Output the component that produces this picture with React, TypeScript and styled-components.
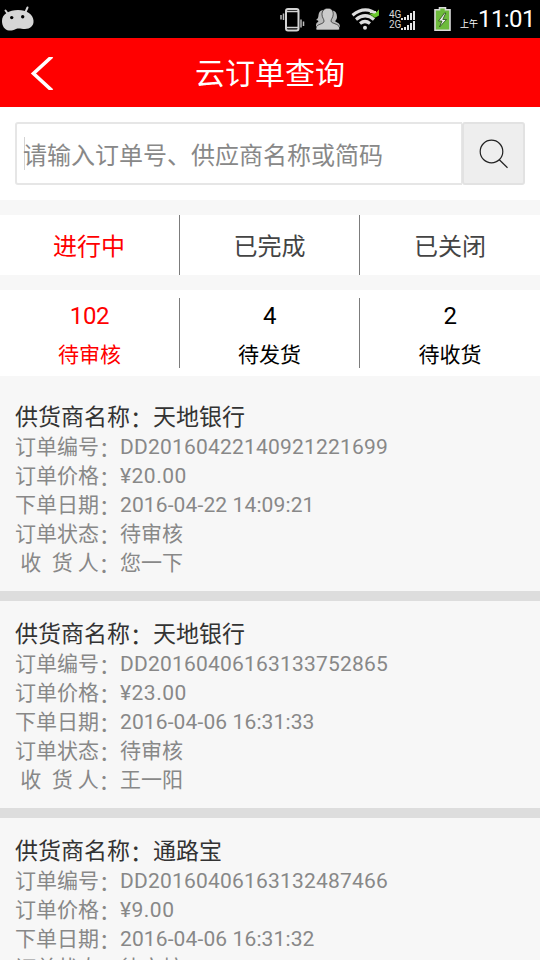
import React from "react";
import styled, { createGlobalStyle } from "styled-components";

const GlobalStyle = createGlobalStyle`
  * { box-sizing: border-box; }
  html, body { margin: 0; height: 960px; overflow: hidden; }
  body {
    background: #f7f7f7;
    font-family: Roboto, "Noto Sans CJK SC", sans-serif;
  }
`;

const Screen = styled.div`
  width: 540px;
  height: 960px;
  overflow: hidden;
  display: flex;
  flex-direction: column;
  background: #f7f7f7;
`;

const StatusBar = styled.div`
  flex: none;
  height: 38px;
  display: flex;
  align-items: flex-start;
  background: #000;
  color: #fff;
`;

const StatusIcon = styled.svg<{ $left?: number }>`
  flex: none;
  display: block;
  margin-left: ${(p) => p.$left ?? 0}px;
`;

const Spacer = styled.div`
  flex: 1;
`;

const Networks = styled.div`
  margin: 10px 0 0 9px;
  width: 28px;
`;

const Network = styled.div`
  height: 10px;
  display: flex;
  align-items: center;
  font-size: 10px;
  line-height: 10px;
  color: #d8d8d8;
  white-space: nowrap;
`;

const Meridiem = styled.span`
  margin: 15px 0 0 9px;
  width: 18px;
  font-size: 9px;
  line-height: 18px;
`;

const Clock = styled.span`
  width: 62px;
  font-size: 24px;
  line-height: 38px;
  letter-spacing: -0.6px;
`;

const Header = styled.header`
  flex: none;
  height: 69px;
  display: grid;
  grid-template-columns: 84px 1fr 84px;
  align-items: center;
  background: #f00;
  color: #fff;
`;

const BackButton = styled.button`
  height: 69px;
  padding: 0 0 0 30px;
  border: 0;
  background: none;
  display: flex;
  align-items: center;
`;

const Title = styled.h1`
  margin: 0;
  font-size: 30px;
  line-height: 71px;
  font-weight: 400;
  text-align: center;
`;

const SearchBar = styled.div`
  flex: none;
  height: 93px;
  padding: 15px;
  display: flex;
  background: #fff;
`;

const SearchField = styled.div`
  width: 447px;
  height: 63px;
  padding-left: 8px;
  display: flex;
  align-items: center;
  border: 2px solid #e6e6e6;
  border-right-width: 1px;
  border-radius: 3px 0 0 3px;
  color: #888;
  font-size: 24px;
  line-height: 34px;
`;

const Placeholder = styled.span`
  padding-top: 4px;
`;

const Caret = styled.span`
  width: 1px;
  height: 33px;
  margin: 0 -2px 0 -1px;
  background: #d4d4d4;
`;

const SearchButton = styled.button`
  width: 63px;
  height: 63px;
  padding: 0;
  display: flex;
  align-items: center;
  justify-content: center;
  border: 2px solid #e2e2e2;
  border-radius: 3px;
  background: #eee;
`;

const Tabs = styled.nav`
  flex: none;
  height: 60px;
  margin-top: 15px;
  display: grid;
  grid-template-columns: repeat(3, 180px);
  grid-template-rows: 60px;
  background: #fff;
`;

const Tab = styled.div<{ $active?: boolean }>`
  padding: 4px 1px 0 0;
  text-align: center;
  font-size: 24px;
  line-height: 56px;
  color: ${(p) => (p.$active ? "#f00" : "#444")};
  & + & { padding-right: 0; }
  &:not(:last-child) { border-right: 1px solid #7c7c7c; }
`;

const Stats = styled.div`
  flex: none;
  height: 86px;
  margin-top: 15px;
  padding: 8px 0;
  display: grid;
  grid-template-columns: repeat(3, 180px);
  background: #fff;
`;

const Stat = styled.div<{ $active?: boolean }>`
  height: 70px;
  display: flex;
  flex-direction: column;
  align-items: center;
  color: ${(p) => (p.$active ? "#f00" : "#000")};
  &:not(:last-child) { border-right: 1px solid #7c7c7c; }
`;

const Count = styled.span`
  height: 37px;
  font-size: 24px;
  line-height: 37px;
  letter-spacing: -0.3px;
`;

const StatLabel = styled.span`
  font-size: 21px;
  line-height: 41px;
`;

const OrderList = styled.main`
  flex: 1;
  min-height: 0;
  padding-top: 8px;
  overflow: hidden;
`;

const OrderCard = styled.article`
  height: 217px;
  padding: 15px 15px 0;
  border-bottom: 10px solid #ddd;
`;

const Supplier = styled.div`
  height: 34px;
  font-size: 23px;
  line-height: 38px;
  color: #333;
`;

const OrderRow = styled.div`
  height: 29px;
  display: flex;
  font-size: 21px;
  line-height: 29px;
  color: #888;
  white-space: pre;
`;

const RowLabel = styled.span`
  width: 105px;
`;

const Colon = styled.span`
  line-height: 0;
  vertical-align: -2px;
`;

const RowValue = styled.span<{ $tracking?: number }>`
  letter-spacing: ${(p) => p.$tracking ?? 0}px;
`;

interface Order {
  supplier: string;
  code: string;
  price: string;
  date: string;
  receiver: string;
}

const orders: Order[] = [
  { supplier: "天地银行", code: "DD20160422140921221699", price: "¥20.00", date: "2016-04-22 14:09:21", receiver: "您一下" },
  { supplier: "天地银行", code: "DD20160406163133752865", price: "¥23.00", date: "2016-04-06 16:31:33", receiver: "王一阳" },
  { supplier: "通路宝", code: "DD20160406163132487466", price: "¥9.00", date: "2016-04-06 16:31:32", receiver: "王一阳" },
];

const tabs = ["进行中", "已完成", "已关闭"];
const stats = [
  { count: 102, label: "待审核" },
  { count: 4, label: "待发货" },
  { count: 2, label: "待收货" },
];

const Bars = () => (
  <svg width="15" height="9" viewBox="0 0 15 9" fill="#e4e4e4">
    <path d="M0 7h2v2H0zM3 6h2v3H3zM6 4h2v5H6zM9 2h2v7H9zM12 0h2v9h-2z" />
  </svg>
);

const Robot = () => (
  <StatusIcon width="38" height="38" viewBox="0 0 38 38">
    <path d="M5.500 10.500l2.500 3.500M27.500 7.500L25.500 12" stroke="#d6d6d6" strokeWidth="2" strokeLinecap="round" />
    <path d="M2 21C2 14 9 10 18 10s15 4.500 15.500 10.500C34 26 30 29 25 29c-4 0-6-1-9 0-3 1.500-5 1.700-7 1.500C4.500 30 2 26 2 21z" fill="#d6d6d6" />
    <circle cx="11.700" cy="17.600" r="1.700" />
    <circle cx="22.700" cy="16.800" r="1.700" />
  </StatusIcon>
);

const Vibrate = () => (
  <StatusIcon width="26" height="38" viewBox="280 0 26 38" fill="none">
    <rect x="286" y="9" width="12.500" height="21.500" rx="2" stroke="#d4d4d4" strokeWidth="2" />
    <path d="M286 11.500h12.500M286 27.500h12.500" stroke="#d4d4d4" strokeWidth="1.500" />
    <path d="M283.500 13.500v6.500M281 15v4.500M301 19.500v8M303.500 21.500v4.500" stroke="#bbb" strokeWidth="1.500" />
  </StatusIcon>
);

const People = () => (
  <StatusIcon $left={8} width="28" height="38" viewBox="315 0 28 38" fill="#ccc">
    <path d="M319 22c1-1 0-2-2-2 3-2 2-4 3-7 1-3 5-4 8-2v13l-9 3h-2c0-3 0-4 2-5z" fill="#bbb" />
    <path d="M332 11c4-1 6 2 6 6 0 3-3 4-1 5s4 1 4 5h-9z" fill="#bbb" />
    <path d="M329 8.300c3.700 0 5.400 2.700 5.200 6.200-.1 3-2.200 4.700-2.200 6.500 0 2.800 7.500 2.300 8.500 6.500.2 1 .1 2-.5 2.500h-22.500c-.8-.8-.5-2.700.3-3.800 1.900-2.400 7.200-2.200 7.200-5.200 0-1.900-2-3.500-2-6.500-.1-3.700 2-6.200 6-6.200z" stroke="#000" strokeWidth=".6" />
  </StatusIcon>
);

const Wifi = () => (
  <StatusIcon $left={9} width="29" height="38" viewBox="352 0 29 38" fill="none">
    <path d="M353.500 15.200Q366.500 4.500 379 15.200M357 19.500Q366.500 12 375 19.500M361 23.500q5-4 10 0" stroke="#dedede" strokeWidth="3.200" />
    <circle cx="366" cy="27.700" r="2" fill="#dedede" />
    <path d="M370 14.500l5 3.200 5-8.200v6l-4 2z" fill="#69c82b" />
    <path d="M370 13.500h6l4-4v5l-4 3z" fill="#69c82b" />
    <path d="M371 12h6" stroke="#dedede" strokeWidth="2" />
  </StatusIcon>
);

const Battery = () => (
  <StatusIcon $left={17} width="17" height="38" viewBox="434 0 17 38">
    <path d="M439.500 7.800h6v2h4.500v20.500h-15v-20.500h4.500z" fill="#6dbb3b" stroke="#dadada" strokeWidth="1.600" />
    <path d="M444.500 13l-6 8h3.500l-2.500 6 7-7.500h-3.700l3-6.500z" fill="#eee" stroke="#284917" strokeWidth=".8" />
  </StatusIcon>
);

export default function App() {
  return (
    <>
      <GlobalStyle />
      <Screen>
        <StatusBar>
          <Robot />
          <Spacer />
          <Vibrate />
          <People />
          <Wifi />
          <Networks>
            <Network>4G<Bars /></Network>
            <Network>2G<Bars /></Network>
          </Networks>
          <Battery />
          <Meridiem>上午</Meridiem>
          <Clock>11:01</Clock>
        </StatusBar>

        <Header>
          <BackButton aria-label="返回">
            <svg width="24" height="33" viewBox="0 0 24 33" fill="none" stroke="#fff" strokeWidth="3.600">
              <path d="M22 -0.500L3.500 16.500l18.500 17" />
            </svg>
          </BackButton>
          <Title>云订单查询</Title>
        </Header>

        <SearchBar>
          <SearchField>
            <Caret />
            <Placeholder>请输入订单号、供应商名称或简码</Placeholder>
          </SearchField>
          <SearchButton aria-label="搜索">
            <svg width="30" height="30" viewBox="0 0 30 30" fill="none" stroke="#222" strokeWidth="1.200">
              <circle cx="12.500" cy="12.500" r="11.300" />
              <path d="M20.300 20.700l8.200 8" />
            </svg>
          </SearchButton>
        </SearchBar>

        <Tabs>
          {tabs.map((name, i) => (
            <Tab key={name} $active={i === 0}>{name}</Tab>
          ))}
        </Tabs>

        <Stats>
          {stats.map((s, i) => (
            <Stat key={s.label} $active={i === 0}>
              <Count>{s.count}</Count>
              <StatLabel>{s.label}</StatLabel>
            </Stat>
          ))}
        </Stats>

        <OrderList>
          {orders.map((o) => (
            <OrderCard key={o.code}>
              <Supplier>供货商名称<Colon>：</Colon>{o.supplier}</Supplier>
              <OrderRow><RowLabel>订单编号<Colon>：</Colon></RowLabel><RowValue $tracking={0.2}>{o.code}</RowValue></OrderRow>
              <OrderRow><RowLabel>订单价格<Colon>：</Colon></RowLabel><RowValue $tracking={0.5}>{o.price}</RowValue></OrderRow>
              <OrderRow><RowLabel>下单日期<Colon>：</Colon></RowLabel><RowValue $tracking={0.12}>{o.date}</RowValue></OrderRow>
              <OrderRow><RowLabel>订单状态<Colon>：</Colon></RowLabel><RowValue>待审核</RowValue></OrderRow>
              <OrderRow><RowLabel>{" 收  货 人"}<Colon>：</Colon></RowLabel><RowValue>{o.receiver}</RowValue></OrderRow>
            </OrderCard>
          ))}
        </OrderList>
      </Screen>
    </>
  );
}
